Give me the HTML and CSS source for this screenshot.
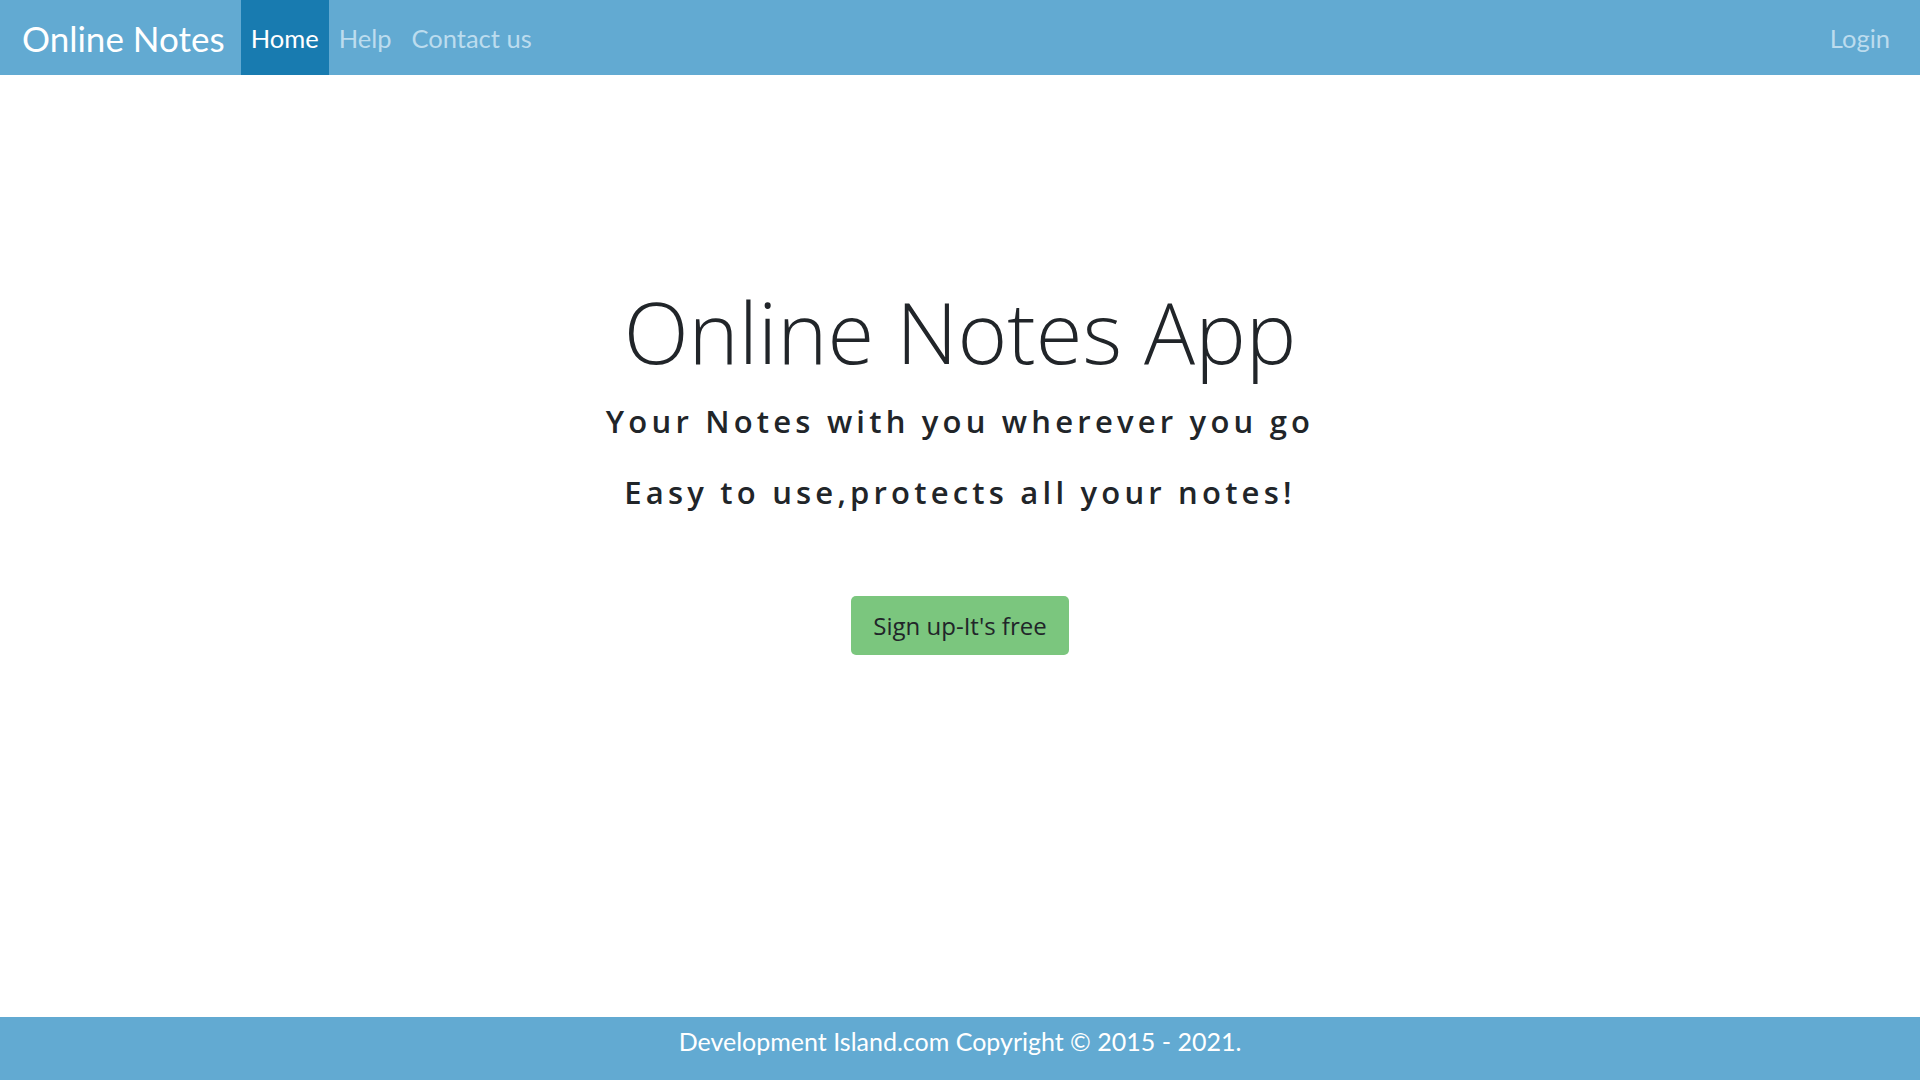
FILE: index.html
```html
<!DOCTYPE html>
<html lang="en">
<head>
<meta charset="utf-8">
<title>Online Notes</title>
<link rel="stylesheet" href="styles.css">
</head>
<body>
<nav class="navbar">
  <a class="brand" href="#">Online Notes</a>
  <ul class="nav-links">
    <li><a class="nav-link active" href="#">Home</a></li>
    <li><a class="nav-link" href="#">Help</a></li>
    <li><a class="nav-link" href="#">Contact us</a></li>
  </ul>
  <ul class="nav-links nav-right">
    <li><a class="nav-link" href="#">Login</a></li>
  </ul>
</nav>
<main class="hero">
  <h1 class="title">Online Notes App</h1>
  <p class="tagline">Your Notes with you wherever you go</p>
  <p class="tagline second">Easy to use,protects all your notes!</p>
  <button class="signup" type="button">Sign up-It's free</button>
</main>
<footer class="footer">
  <p>Development Island.com Copyright &copy; 2015 - 2021.</p>
</footer>
</body>
</html>
```
FILE: styles.css
```css
* { box-sizing: border-box; }
html, body { height: 100%; }
body {
  margin: 0;
  display: flex;
  flex-direction: column;
  min-height: 100vh;
  font-family: "Open Sans", "Noto Sans", sans-serif;
  color: #212529;
  background: #fff;
}
.navbar {
  height: 75px;
  background: #62aad2;
  display: flex;
  align-items: stretch;
  padding: 0 20px 0 22px;
  font-family: "Lato", "Noto Sans", sans-serif;
}
.brand {
  color: #fff;
  text-decoration: none;
  font-size: 35px;
  display: flex;
  align-items: center;
  margin-right: 16px;
}
.nav-links {
  list-style: none;
  margin: 0;
  padding: 0;
  display: flex;
  align-items: stretch;
}
.nav-right { margin-left: auto; }
.nav-link {
  display: flex;
  align-items: center;
  height: 100%;
  padding: 0 10px;
  font-size: 25.5px;
  color: #bcdcee;
  text-decoration: none;
}
.nav-link.active {
  background: #187bb0;
  color: #fff;
}
.hero {
  flex: 1;
  display: flex;
  flex-direction: column;
  align-items: center;
  text-align: center;
  padding-top: 205px;
}
.title {
  margin: 0;
  font-size: 85px;
  font-weight: 300;
  line-height: 1.2;
}
.tagline {
  margin: 16px 0 0;
  font-size: 31px;
  font-weight: 600;
  letter-spacing: 4.2px;
  line-height: 1.5;
}
.tagline.second { margin-top: 24px; }
.signup {
  margin-top: 81px;
  width: 218px;
  height: 59px;
  border: none;
  border-radius: 5px;
  background: #7bc67e;
  color: #212529;
  font-family: "Open Sans", "Noto Sans", sans-serif;
  font-size: 24px;
  cursor: pointer;
}
.footer {
  height: 63px;
  background: #62aad2;
  color: #fff;
  font-family: "Lato", "Noto Sans", sans-serif;
  font-size: 25px;
  display: flex;
  align-items: center;
  justify-content: center;
  padding-bottom: 15px;
}
.footer p { margin: 0; }
```
